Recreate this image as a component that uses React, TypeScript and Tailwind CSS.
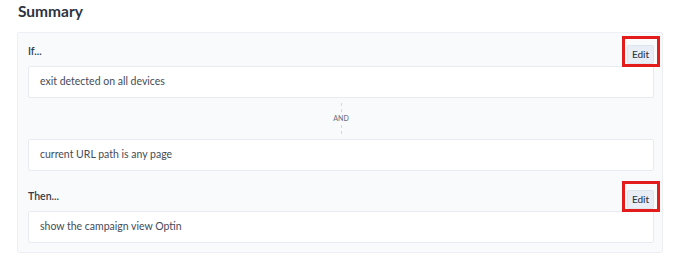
import React from "react"

function EditButton() {
  return (
    <div className="relative">
      <button className="h-[19px] w-[27px] rounded-[2px] border border-[#dde4ee] bg-[#e9eef6] text-[10px] font-medium leading-none text-[#2f3643]">
        Edit
      </button>
      {/* annotation box */}
      <span className="pointer-events-none absolute -left-[5px] -right-[6px] -top-[4px] -bottom-[3px] border-[3px] border-[#e41b1b]" />
    </div>
  )
}

function RuleBox({ text }: { text: string }) {
  return (
    <div className="flex h-[32px] items-center rounded-[2px] border border-[#e8ebf1] bg-white pl-[11px] text-[10.5px] text-[#444b57]">
      {text}
    </div>
  )
}

export default function App() {
  return (
    <div
      className="h-[269px] w-[680px] bg-white px-[17px]"
      style={{ fontFamily: "Lato, 'Open Sans', Arial, sans-serif" }}
    >
      <h2 className="flex h-[32px] items-start pl-px pt-[1px] text-[15.5px] font-bold leading-[20px] text-[#2d3440]">
        Summary
      </h2>

      <div className="w-[646px] rounded-[2px] border border-[#eceff4] bg-[#f9fafc] pb-[9px] pl-[10px] pr-[8px]">
        <div className="flex h-[33px] items-center justify-between pt-[5px]">
          <span className="text-[10.5px] font-semibold text-[#333a46]">If...</span>
          <EditButton />
        </div>

        <RuleBox text="exit detected on all devices" />

        <div className="flex h-[41px] flex-col items-center justify-center gap-[3px]">
          <div className="h-[9px] border-l border-dashed border-[#d3d7de]" />
          <span className="text-[7px] font-medium leading-none text-[#6b7280]">AND</span>
          <div className="h-[9px] border-l border-dashed border-[#d3d7de]" />
        </div>

        <RuleBox text="current URL path is any page" />

        <div className="mt-[12px] flex h-[28px] items-center justify-between">
          <span className="text-[10.5px] font-semibold text-[#333a46]">Then...</span>
          <EditButton />
        </div>

        <RuleBox text="show the campaign view Optin" />
      </div>
    </div>
  )
}
